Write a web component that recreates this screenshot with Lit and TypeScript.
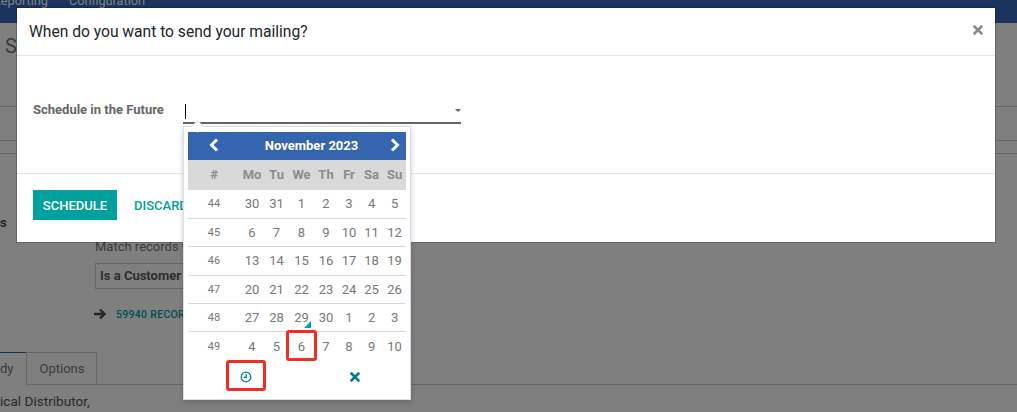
import { LitElement, html, css, svg } from "lit";
import { customElement } from "lit/decorators.js";

const weeks: [number, number[]][] = [
  [44, [30, 31, 1, 2, 3, 4, 5]],
  [45, [6, 7, 8, 9, 10, 11, 12]],
  [46, [13, 14, 15, 16, 17, 18, 19]],
  [47, [20, 21, 22, 23, 24, 25, 26]],
  [48, [27, 28, 29, 30, 1, 2, 3]],
  [49, [4, 5, 6, 7, 8, 9, 10]],
];
const heads = ["Mo", "Tu", "We", "Th", "Fr", "Sa", "Su"];
const colWidths = [52, 24, 25, 25, 24, 22, 23, 23];

@customElement("app-root")
export class AppRoot extends LitElement {
  static styles = css`
    :host { display: block; position: relative; width: 1017px; height: 412px; overflow: hidden; background: #fff; font-family: Roboto, "Liberation Sans", sans-serif; color: #666; font-size: 13px; }
    * { box-sizing: border-box; }
    .nav { height: 23px; background: #3468bc; color: #fff; display: flex; gap: 21px; font-size: 12.7px; line-height: 13px; overflow: hidden; }
    .nav span { margin-top: -6px; }
    .nav span:first-child { margin-left: -7px; }
    .bg { position: absolute; }
    .bgS { left: 5px; top: 34px; font-size: 20px; line-height: 24px; color: #777; }
    .line { position: absolute; left: 0; right: 0; height: 1px; background: #ccc; }
    .bgs { left: 0; top: 215px; font-weight: 700; color: #4c4c4c; }
    .match { left: 95px; top: 239px; font-size: 13px; color: #777; }
    .cust { left: 95px; top: 263px; width: 120px; height: 26px; border: 1px solid #ccc; font-weight: 700; padding: 4px 4px; color: #5c5c5c; }
    .arrow { left: 94px; top: 308px; }
    .rec { left: 116px; top: 308px; font-size: 10.5px; font-weight: 500; color: #00a09d; letter-spacing: .3px; }
    .tabline { position: absolute; left: 0; right: 0; top: 384px; height: 1px; background: #ccc; }
    .tab1 { left: 0; top: 352px; width: 27px; height: 33px; border-top: 1px solid #34629f; border-right: 1px solid #ccc; background: #fff; line-height: 32px; color: #777; }
    .tab2 { left: 26px; top: 352px; width: 71px; height: 33px; border: 1px solid #ccc; text-align: center; line-height: 32px; padding-left: 1px; color: #777; }
    .bodytxt { left: 0; top: 393px; font-size: 13.6px; white-space: nowrap; color: #555; }
    .backdrop { position: absolute; inset: 0; background: rgba(0, 0, 0, .5); }

    .modal { position: absolute; left: 17px; top: 8px; width: 978px; height: 234px; background: #fff; box-shadow: 0 0 0 1px rgba(0,0,0,.2); display: flex; flex-direction: column; }
    .mhead { height: 48px; border-bottom: 1px solid #e5e5e5; display: flex; align-items: center; justify-content: space-between; padding: 0 12px; flex: none; }
    .mhead h4 { margin: 0; font-size: 15.6px; font-weight: 400; color: #212529; }
    .close { display: block; margin: -3px 0 0; }
    .mbody { flex: 1; display: flex; align-items: flex-start; padding: 40px 16px 0; }
    .label { width: 150px; font-weight: 700; color: #666; font-size: 13px; line-height: 16px; margin-top: 6px; white-space: nowrap; }
    .input { width: 278px; height: 28px; border-bottom: 2px solid #666; position: relative; }
    .caret { position: absolute; left: 2px; top: 8px; width: 1px; height: 15px; background: #000; }
    .tri { position: absolute; right: 0; top: 13px; width: 0; height: 0; border: 3px solid transparent; border-top-color: #666; border-bottom: 0; }
    .mfoot { flex: none; height: 69px; border-top: 1px solid #e5e5e5; display: flex; align-items: center; padding: 0 16px 6px; gap: 7px; }
    .btn { height: 30px; padding: 0 10px; display: flex; align-items: center; font-size: 13px; font-weight: 500; text-transform: uppercase; }
    .primary { background: #00a09d; color: #fff; width: 84px; justify-content: center; }
    .link { color: #00a09d; }

    .dp { position: absolute; left: 183px; top: 126px; width: 228px; height: 274px; background: #fff; border: 1px solid #dcdce6; box-shadow: 0 2px 6px rgba(0,0,0,.2); padding: 5px 4px 0; }
    .dp::before { content: ""; position: absolute; left: 8px; top: -6px; width: 10px; height: 10px; background: #fff; border-left: 1px solid #ddd; border-top: 1px solid #ddd; transform: rotate(45deg) scale(.8); }
    table { width: 218px; border-collapse: collapse; table-layout: fixed; font-size: 13px; color: #777; }
    .th1 th { height: 28px; background: #3465ae; color: #fff; font-size: 13px; font-weight: 700; padding: 0 0 2px; }
    .th2 th { height: 30px; background: #d9d9d9; color: #8c8c8c; font-size: 13px; font-weight: 700; padding: 0 0 2px; }
    td { height: 28.4px; text-align: center; padding: 0; border-bottom: 1px solid #d9d9d9; position: relative; }
    tr:last-child td { border-bottom: 0; }
    td.wk { font-size: 11px; color: #777; }
    .mark { position: absolute; right: 3px; bottom: 3px; width: 0; height: 0; border-left: 7px solid transparent; border-bottom: 7px solid #00a09d; }
    .sel::after { content: ""; position: absolute; inset: -2px -3px -1px -3px; border: 3px solid #ee2d24; border-radius: 3px; }
    .tools { display: flex; height: 33px; }
    .tool { display: flex; align-items: center; justify-content: center; }
    .tool.t1 { width: 116px; position: relative; }
    .tool.t2 { width: 102px; }
    .redbox { position: absolute; left: 38px; top: 0; width: 40px; height: 31px; border: 3px solid #ee2d24; border-radius: 3px; }
  `;

  render() {
    const x = svg`<path d="M2 2 L10 10 M10 2 L2 10" stroke-width="3.2" fill="none" stroke-linecap="square"/>`;
    return html`
      <div class="nav"><span>Reporting</span><span>Configuration</span></div>
      <div class="bg bgS">S</div>
      <div class="line" style="top:106px"></div>
      <div class="line" style="top:140px"></div>
      <div class="line" style="top:153px"></div>
      <div class="bg bgs">s</div>
      <div class="bg match">Match records with the following rule:</div>
      <div class="bg cust">Is a Customer</div>
      <svg class="bg arrow" width="12" height="12" viewBox="0 0 12 12"><path d="M0 6H10M6 1.5L10.5 6L6 10.5" stroke="#4c4c4c" stroke-width="2.4" fill="none"/></svg>
      <div class="bg rec">59940 RECORDS</div>
      <div class="tabline"></div>
      <div class="bg tab1">dy</div>
      <div class="bg tab2">Options</div>
      <div class="bg bodytxt">ical Distributor,</div>
      <div class="backdrop"></div>

      <div class="modal">
        <div class="mhead">
          <h4>When do you want to send your mailing?</h4>
          <svg class="close" width="10" height="10" viewBox="0 0 12 12" stroke="#8a8a8a">${x}</svg>
        </div>
        <div class="mbody">
          <div class="label">Schedule in the Future</div>
          <div class="input"><div class="caret"></div><div class="tri"></div></div>
        </div>
        <div class="mfoot">
          <div class="btn primary">Schedule</div>
          <div class="btn link">Discard</div>
        </div>
      </div>

      <div class="dp">
        <table>
          <colgroup>${colWidths.map((w) => html`<col style="width:${w}px" />`)}</colgroup>
          <thead>
            <tr class="th1">
              <th><svg width="12" height="14" viewBox="0 0 12 14" style="display:block;margin:auto"><path d="M9 1.5L3.5 7L9 12.5" stroke="#fff" stroke-width="3" fill="none"/></svg></th>
              <th colspan="6">November 2023</th>
              <th><svg width="12" height="14" viewBox="0 0 12 14" style="display:block;margin:auto"><path d="M3 1.5L8.5 7L3 12.5" stroke="#fff" stroke-width="3" fill="none"/></svg></th>
            </tr>
            <tr class="th2"><th>#</th>${heads.map((h) => html`<th>${h}</th>`)}</tr>
          </thead>
          <tbody>
            ${weeks.map(([w, ds]) => html`<tr>
              <td class="wk">${w}</td>
              ${ds.map((d) => html`<td class=${w === 49 && d === 6 ? "sel" : ""}>${d}${w === 48 && d === 29 ? html`<span class="mark"></span>` : ""}</td>`)}
            </tr>`)}
          </tbody>
        </table>
        <div class="tools">
          <div class="tool t1"><span class="redbox"></span>
            <svg width="12" height="12" viewBox="0 0 12 12" fill="none" stroke="#017e84" stroke-width="1.3"><circle cx="6" cy="6" r="4.8"/><path d="M6.3 3V6.3H3.6"/></svg>
          </div>
          <div class="tool t2"><svg width="10" height="10" viewBox="0 0 12 12" stroke="#017e84">${x}</svg></div>
        </div>
      </div>
    `;
  }
}
